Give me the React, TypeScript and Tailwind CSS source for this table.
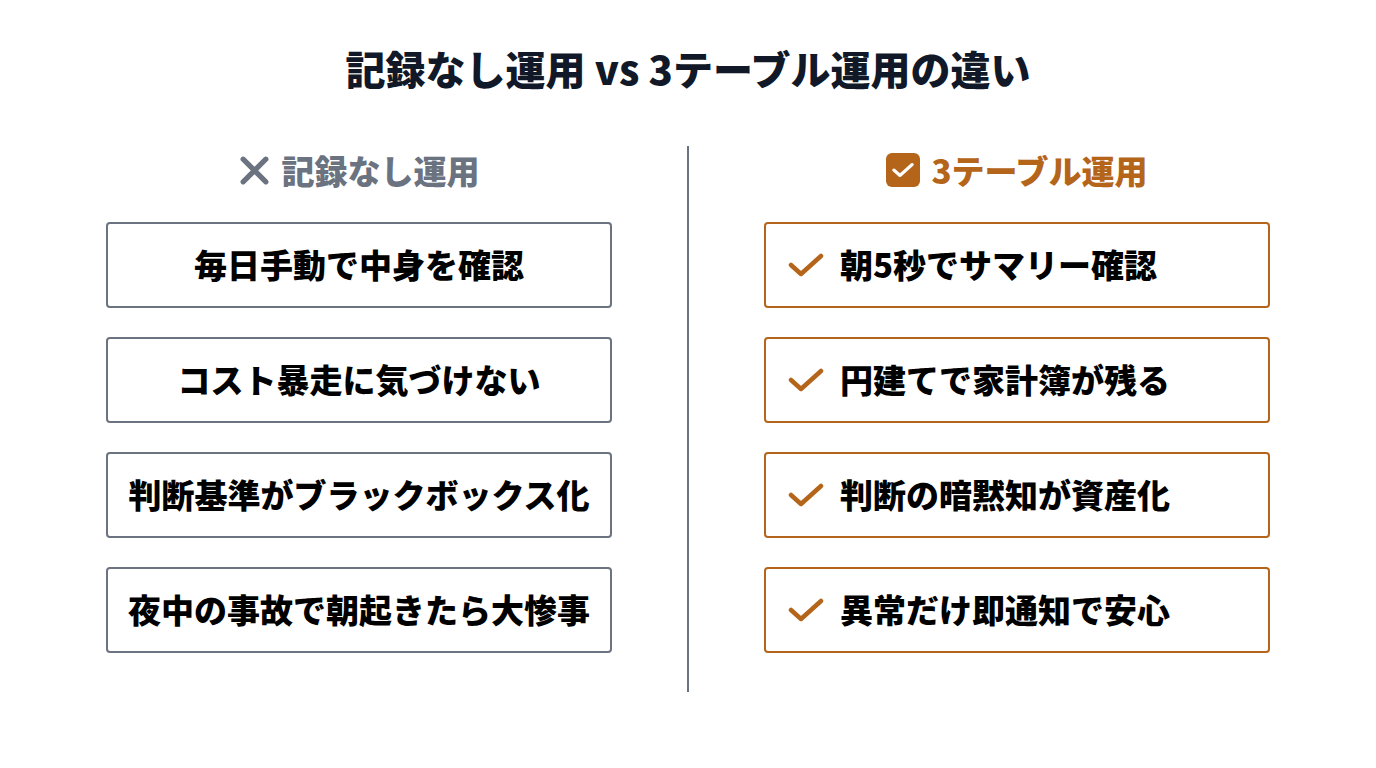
const font = { fontFamily: '"Noto Sans CJK JP", "Noto Sans", sans-serif' };

const bad = [
  '毎日手動で中身を確認',
  'コスト暴走に気づけない',
  '判断基準がブラックボックス化',
  '夜中の事故で朝起きたら大惨事',
];

const good = [
  '朝5秒でサマリー確認',
  '円建てで家計簿が残る',
  '判断の暗黙知が資産化',
  '異常だけ即通知で安心',
];

function Check({ className, width = 4 }: { className?: string; width?: number }) {
  return (
    <svg viewBox="0 0 36 26" className={className} fill="none">
      <path d="M3 13 L13 22 L33 4" stroke="currentColor" strokeWidth={width} strokeLinecap="round" strokeLinejoin="round" />
    </svg>
  );
}

export default function App() {
  return (
    <div className="w-[1376px] h-[768px] bg-white flex flex-col items-center" style={font}>
      <h1 className="mt-[43px] h-[50px] leading-[50px] text-[40px] font-black text-[#111827]">
        記録なし運用 vs 3テーブル運用の違い
      </h1>

      <div className="mt-[53px] flex items-stretch gap-[75px]">
        <div className="w-[506px] flex flex-col">
          <div className="h-[48px] flex items-center justify-center gap-[12px] text-[#6b7280]">
            <svg viewBox="0 0 30 30" className="w-[31px] h-[31px]" fill="none">
              <path d="M4 4 L26 26 M26 4 L4 26" stroke="currentColor" strokeWidth="5" strokeLinecap="round" />
            </svg>
            <span className="text-[33px] font-black leading-none">記録なし運用</span>
          </div>
          <div className="mt-[28px] flex flex-col gap-[29px]">
            {bad.map((t) => (
              <div
                key={t}
                className="h-[86px] border-2 border-[#6b7280] rounded-[4px] flex items-center justify-center text-[33px] font-black text-black"
              >
                {t}
              </div>
            ))}
          </div>
        </div>

        <div className="w-[2px] h-[546px] bg-[#6b7280]" />

        <div className="w-[506px] flex flex-col">
          <div className="h-[48px] flex items-center justify-center gap-[11px] text-[#b5651a]">
            <div className="w-[34px] h-[34px] rounded-[6px] bg-[#b5651a] flex items-center justify-center">
              <Check className="w-[22px] h-[16px] text-white" width={5} />
            </div>
            <span className="text-[33px] font-black leading-none">3テーブル運用</span>
          </div>
          <div className="mt-[28px] flex flex-col gap-[29px]">
            {good.map((t) => (
              <div
                key={t}
                className="h-[86px] border-2 border-[#b5651a] rounded-[4px] flex items-center pl-[22px] gap-[16px] text-[33px] font-black text-black"
              >
                <Check className="w-[36px] h-[26px] text-[#b5651a]" width={4.5} />
                <span>{t}</span>
              </div>
            ))}
          </div>
        </div>
      </div>
    </div>
  );
}
